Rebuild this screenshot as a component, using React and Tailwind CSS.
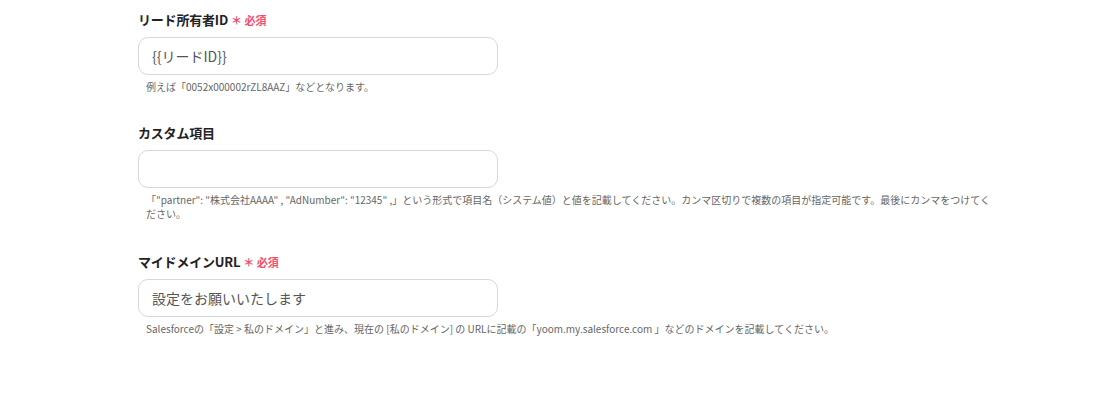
// フォーム: Salesforce リード設定の入力欄 3 つ
// ラベル + 入力欄 + 補足テキスト

const FIELDS = [
  {
    id: 'owner',
    label: 'リード所有者ID',
    required: true,
    value: '{{リードID}}',
    help: '例えば「0052x000002rZL8AAZ」などとなります。',
    gap: 'mb-[29px]',
  },
  {
    id: 'custom',
    label: 'カスタム項目',
    required: false,
    value: '',
    help: '「"partner": "株式会社AAAA" , "AdNumber": "12345" ,」という形式で項目名（システム値）と値を記載してください。カンマ区切りで複数の項目が指定可能です。最後にカンマをつけてください。',
    gap: 'mb-[31px]',
  },
  {
    id: 'domain',
    label: 'マイドメインURL',
    required: true,
    value: '設定をお願いいたします',
    help: 'Salesforceの「設定 > 私のドメイン」と進み、現在の [私のドメイン] の URLに記載の「yoom.my.salesforce.com 」などのドメインを記載してください。',
    gap: 'mb-[29px]',
  },
];

function Field({ field }) {
  return (
    <div className={field.gap}>
      <div className="flex items-center gap-[3px] h-5">
        <span className="text-[13px] font-bold text-[#222] tracking-[-0.2px]">
          {field.label}
        </span>
        {field.required && (
          <span className="text-[11px] font-bold text-[#f0506e]">＊ 必須</span>
        )}
      </div>
      <input
        type="text"
        readOnly
        value={field.value}
        className="mt-[7px] block w-[360px] h-[38px] rounded-[10px] border border-[#d4d7dc] bg-white px-[13px] text-[14px] text-[#555] outline-none"
      />
      <p className="mt-[5px] pl-[8px] w-[860px] text-[10px] leading-[14px] text-[#666]">
        {field.help}
      </p>
    </div>
  );
}

export default function App() {
  return (
    <div
      className="min-h-[402px] bg-white pl-[138px] pt-[10px]"
      style={{ fontFamily: '"Noto Sans CJK JP", "Noto Sans", sans-serif' }}
    >
      {FIELDS.map((field) => (
        <Field key={field.id} field={field} />
      ))}
    </div>
  );
}
